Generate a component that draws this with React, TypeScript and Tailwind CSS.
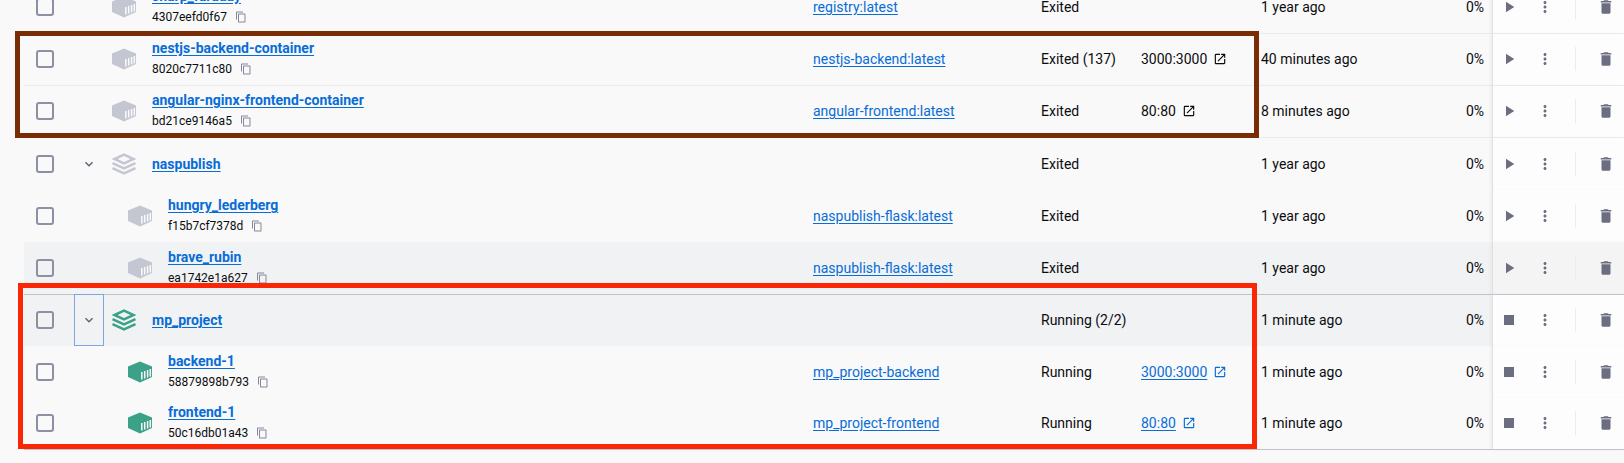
import React from 'react';
import {
  MdContentCopy,
  MdDelete,
  MdKeyboardArrowDown,
  MdMoreVert,
  MdOpenInNew,
  MdPlayArrow,
  MdStop,
} from 'react-icons/md';

type Row = {
  name: string;
  id?: string;
  image?: string;
  status: string;
  port?: string;
  started: string;
  running?: boolean;
  group?: boolean;
  child?: boolean;
  focused?: boolean;
  tone?: string;
  actionTone?: string;
  line?: string;
};

const ROWS: Row[] = [
  { name: 'sharp_faraday', id: '4307eefd0f67', image: 'registry:latest', status: 'Exited', started: '1 year ago', line: 'border-b border-[#ececee] pb-px' },
  { name: 'nestjs-backend-container', id: '8020c7711c80', image: 'nestjs-backend:latest', status: 'Exited (137)', port: '3000:3000', started: '40 minutes ago', line: 'border-b border-[#ececee] pb-px' },
  { name: 'angular-nginx-frontend-container', id: 'bd21ce9146a5', image: 'angular-frontend:latest', status: 'Exited', port: '80:80', started: '8 minutes ago', line: 'border-b border-[#ececee] pb-px' },
  { name: 'naspublish', status: 'Exited', started: '1 year ago', group: true },
  { name: 'hungry_lederberg', id: 'f15b7cf7378d', image: 'naspublish-flask:latest', status: 'Exited', started: '1 year ago', child: true },
  { name: 'brave_rubin', id: 'ea1742e1a627', image: 'naspublish-flask:latest', status: 'Exited', started: '1 year ago', child: true, tone: 'bg-[#f1f2f4]', actionTone: 'bg-[#f4f4f4]' },
  { name: 'mp_project', status: 'Running (2/2)', started: '1 minute ago', group: true, running: true, focused: true, tone: 'bg-[#f1f2f4]', line: 'border-t border-[#c1c3c9] pb-px' },
  { name: 'backend-1', id: '58879898b793', image: 'mp_project-backend', status: 'Running', port: '3000:3000', started: '1 minute ago', child: true, running: true },
  { name: 'frontend-1', id: '50c16db01a43', image: 'mp_project-frontend', status: 'Running', port: '80:80', started: '1 minute ago', child: true, running: true, line: 'border-b border-[#c1c3c9] pb-px' },
];

const ContainerIcon = () => (
  <svg viewBox="0 0 24 22" className="h-[22px] w-6" aria-hidden="true">
    <path fill="currentColor" d="M12 .5 24 5.5V16l-12 5.5L0 16V5.5z" />
    <path
      stroke="#f9f9fa"
      strokeWidth="1.5"
      d="M13.8 11v7.6M16.7 10v7.6M19.6 9v7.6M22.3 8v7.6"
    />
  </svg>
);

const StackIcon = () => (
  <svg viewBox="0 0 24 22" className="h-[22px] w-6" fill="none" stroke="currentColor" strokeWidth="2.5" aria-hidden="true">
    <path d="M12 1.6 21.6 6 12 10.4 2.4 6z" />
    <path d="m.5 10.1 11.5 5.3 11.5-5.3M.5 15.1 12 20.4l11.5-5.3" />
  </svg>
);

const Port = ({ port, running }: { port: string; running?: boolean }) => {
  if (!running) {
    return (
      <span className="flex items-center gap-1.5">
        {port}
        <MdOpenInNew className="size-[14px]" />
      </span>
    );
  }
  return (
    <a href="#port" className="flex items-center gap-1.5 text-[#086dd7]">
      <span className="underline underline-offset-2">{port}</span>
      <MdOpenInNew className="size-[14px]" />
    </a>
  );
};

const ContainerRow = ({ row }: { row: Row }) => {
  const cell = `${row.line ?? ''} ${row.tone ?? ''}`;
  return (
    <tr className="h-[52px]">
      <td className={cell}>
        <input
          type="checkbox"
          aria-label={`Select ${row.name}`}
          className="ml-3 block size-[18px] appearance-none rounded-[3px] border-2 border-[#8d90a3] bg-transparent"
        />
      </td>
      <td className={`${cell} ${row.focused ? 'outline outline-1 -outline-offset-1 outline-[#7fa5de]' : ''}`}>
        {row.group && (
          <button type="button" aria-label={`Collapse ${row.name}`} className="flex w-full justify-center text-[#5f6273]">
            <MdKeyboardArrowDown className="size-4" />
          </button>
        )}
      </td>
      <td className={cell}>
        <div className={`flex items-center gap-4 ${row.child ? 'pl-6' : 'pl-2'}`}>
          <span className={row.running ? 'text-[#3ba188]' : 'text-[#c4c7d1]'}>
            {row.group ? <StackIcon /> : <ContainerIcon />}
          </span>
          <div className="flex flex-col gap-0.5">
            <a href="#container" className="text-sm leading-[18px] font-bold text-[#086dd7] underline underline-offset-2">
              {row.name}
            </a>
            {row.id && (
              <div className="flex items-center gap-2 text-xs leading-5">
                {row.id}
                <button type="button" aria-label={`Copy id ${row.id}`} className="text-[#85889a]">
                  <MdContentCopy className="size-3" />
                </button>
              </div>
            )}
          </div>
        </div>
      </td>
      <td className={cell}>
        {row.image && (
          <a href="#image" className="text-[#086dd7] underline underline-offset-2">{row.image}</a>
        )}
      </td>
      <td className={cell}>{row.status}</td>
      <td className={cell}>{row.port && <Port port={row.port} running={row.running} />}</td>
      <td className={cell}>{row.started}</td>
      <td className={`${cell} pr-2 text-right`}>0%</td>
      <td className={`border-l border-l-[#dfe0e3] shadow-[-2px_0_3px_rgba(0,0,0,0.04)] ${row.line ?? ''} ${row.actionTone ?? 'bg-[#fdfdfd]'}`}>
        <div className="flex items-center pl-1.5 text-[#6b6e80]">
          <button type="button" aria-label={row.running ? 'Stop' : 'Start'} className="flex w-5 justify-center">
            {row.running ? <MdStop className="size-5" /> : <MdPlayArrow className="size-[18px]" />}
          </button>
          <button type="button" aria-label="More actions" className="ml-4 flex w-5 justify-center">
            <MdMoreVert className="size-[18px]" />
          </button>
          <span className="ml-5 h-6 border-l border-[#ececef]" />
          <button type="button" aria-label={`Delete ${row.name}`} className="ml-5 flex w-5 justify-center">
            <MdDelete className="size-[18px]" />
          </button>
        </div>
      </td>
    </tr>
  );
};

export default function App() {
  return (
    <main className="relative min-h-screen overflow-hidden bg-[#f9f9fa] pl-6 font-['Roboto',sans-serif] text-sm text-[#0b0c0e]">
      <table className="-mt-[18px] w-full table-fixed border-separate border-spacing-0 text-left">
        <colgroup>
          <col className="w-[50px]" />
          <col className="w-[30px]" />
          <col />
          <col className="w-[228px]" />
          <col className="w-[100px]" />
          <col className="w-[120px]" />
          <col className="w-[151px]" />
          <col className="w-20" />
          <col className="w-[132px]" />
        </colgroup>
        <tbody>
          {ROWS.map((row) => (
            <ContainerRow key={row.name} row={row} />
          ))}
        </tbody>
      </table>

      {/* highlight frames drawn over the list */}
      <div className="pointer-events-none absolute top-[31px] right-[365px] left-[15px] h-[107px] border-5 border-[#7a2c04]" />
      <div className="pointer-events-none absolute top-[283px] right-[367px] left-[18px] h-[166px] border-5 border-[#fb2605]" />
    </main>
  );
}
